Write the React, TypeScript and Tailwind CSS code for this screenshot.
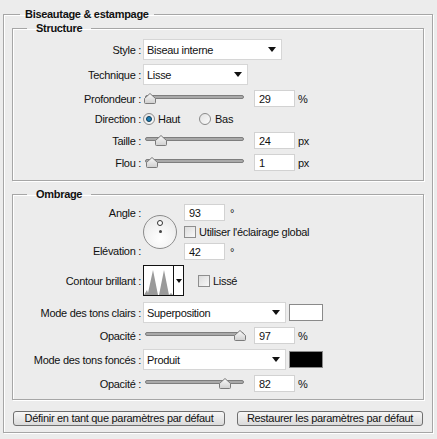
import React from "react";

const font = { fontFamily: '"Liberation Sans", Arial, sans-serif' };

function Label({ children }: { children: React.ReactNode }) {
  return <div className="w-[128px] shrink-0 text-right">{children}</div>;
}

function Arrow() {
  return (
    <svg width="8" height="5" viewBox="0 0 8 5" className="shrink-0">
      <path d="M0 0H8L4 5Z" fill="#111" />
    </svg>
  );
}

function Select({ value, width }: { value: string; width: string }) {
  return (
    <div
      className={`ml-[2px] flex h-[21px] items-center justify-between border border-[#d6d6d6] bg-white pl-[3px] pr-[5px] ${width}`}
    >
      <span>{value}</span>
      <Arrow />
    </div>
  );
}

function NumInput({ value }: { value: string }) {
  return (
    <div className="flex h-[17px] w-[41px] items-center border border-[#d2d2d2] bg-white pl-[4px]">
      {value}
    </div>
  );
}

function Thumb({ left }: { left: number }) {
  return (
    <svg
      width="12"
      height="11"
      viewBox="0 0 12 11"
      className="absolute top-[3px]"
      style={{ left: left - 6 }}
    >
      <defs>
        <linearGradient id="thumbg" x1="0" y1="0" x2="0" y2="1">
          <stop offset="0" stopColor="#fafafa" />
          <stop offset="1" stopColor="#cfcfcf" />
        </linearGradient>
      </defs>
      <path
        d="M6 0.5 L11.5 5.5 V9.5 Q11.5 10.5 10.5 10.5 H1.5 Q0.5 10.5 0.5 9.5 V5.5 Z"
        fill="url(#thumbg)"
        stroke="#7b7b7b"
      />
    </svg>
  );
}

function Slider({ thumb }: { thumb: number }) {
  return (
    <div className="relative ml-[4px] h-[17px] w-[99px] shrink-0">
      <div className="absolute left-0 right-0 top-[5px] h-[4px] rounded-[2px] border border-[#7e7e7e] bg-[#a9a9a9]" />
      <Thumb left={thumb} />
    </div>
  );
}

function SliderRow({
  label,
  thumb,
  value,
  unit,
  className,
}: {
  label: string;
  thumb: number;
  value: string;
  unit: string;
  className: string;
}) {
  return (
    <div className={`flex h-[17px] items-center ${className}`}>
      <Label>{label}</Label>
      <Slider thumb={thumb} />
      <div className="ml-[10px]">
        <NumInput value={value} />
      </div>
      <span className="ml-[3px]">{unit}</span>
    </div>
  );
}

function Checkbox() {
  return (
    <div className="h-[12px] w-[12px] shrink-0 border border-[#8e8e8e] bg-gradient-to-br from-[#dcdcdc] to-[#f8f8f8]" />
  );
}

function Radio({ checked }: { checked?: boolean }) {
  return (
    <div className="flex h-[12px] w-[12px] shrink-0 items-center justify-center rounded-full border border-[#8a8a8a] bg-gradient-to-br from-[#e2e2e2] to-[#fbfbfb]">
      {checked && (
        <div className="h-[6px] w-[6px] rounded-full border border-[#0d3a57] bg-[#1f7fb5]" />
      )}
    </div>
  );
}

const groupBorder =
  "border border-[#a6a6a6] shadow-[inset_1px_1px_0_#fff,1px_1px_0_#fff]";

export default function App() {
  return (
    <div
      className="h-[439px] w-[437px] overflow-hidden bg-[#ececec] pt-[7px] text-[11px] leading-[14px] tracking-[-0.3px] text-[#111]"
      style={font}
    >
      <fieldset className={`ml-[3px] w-[430px] px-[8px] pb-[6px] ${groupBorder}`}>
        <legend className="ml-[8px] px-[5px] font-bold">Biseautage &amp; estampage</legend>

        {/* Structure */}
        <fieldset className={`pb-[9px] ${groupBorder}`}>
          <legend className="ml-[14px] px-[9px] font-bold">Structure</legend>

          <div className="mt-[4px] flex h-[21px] items-center">
            <Label>Style :</Label>
            <Select value="Biseau interne" width="w-[139px]" />
          </div>
          <div className="mt-[4px] flex h-[21px] items-center">
            <Label>Technique :</Label>
            <Select value="Lisse" width="w-[105px]" />
          </div>
          <SliderRow label="Profondeur :" thumb={5} value="29" unit="%" className="mt-[5px]" />
          <div className="mt-[5px] flex h-[14px] items-center">
            <Label>Direction :</Label>
            <div className="ml-[2px]">
              <Radio checked />
            </div>
            <span className="ml-[3px]">Haut</span>
            <div className="ml-[19px]">
              <Radio />
            </div>
            <span className="ml-[4px]">Bas</span>
          </div>
          <SliderRow label="Taille :" thumb={16} value="24" unit="px" className="mt-[6px]" />
          <SliderRow label="Flou :" thumb={7} value="1" unit="px" className="mt-[5px]" />
        </fieldset>

        {/* Ombrage */}
        <fieldset className={`mt-[6px] pb-[7px] ${groupBorder}`}>
          <legend className="ml-[14px] px-[9px] font-bold">Ombrage</legend>

          <div className="mt-[3px] flex h-[56px] items-stretch">
            <div className="flex w-[128px] shrink-0 flex-col justify-between py-[2px] text-right">
              <span>Angle :</span>
              <span>Elévation :</span>
            </div>
            <div className="ml-[2px] flex items-center">
              <div className="flex h-[34px] w-[34px] flex-col items-center rounded-full border border-[#8c8c8c] bg-[radial-gradient(circle_at_50%_70%,#ffffff,#e4e4e4)]">
                <div className="mt-[4px] h-[6px] w-[6px] rounded-full border border-[#333] bg-white" />
                <div className="mt-[4px] h-[3px] w-[3px] rounded-full bg-[#444]" />
              </div>
            </div>
            <div className="ml-[7px] flex flex-col gap-[4px]">
              <div className="flex items-center">
                <NumInput value="93" />
                <span className="ml-[5px]">°</span>
              </div>
              <div className="flex h-[14px] items-center">
                <Checkbox />
                <span className="ml-[3px]">Utiliser l'éclairage global</span>
              </div>
              <div className="flex items-center">
                <NumInput value="42" />
                <span className="ml-[5px]">°</span>
              </div>
            </div>
          </div>

          <div className="mt-[5px] flex h-[31px] items-center">
            <Label>Contour brillant :</Label>
            <div className="ml-[2px] flex h-[31px] w-[41px] border border-[#111] bg-white">
              <svg width="29" height="29" viewBox="0 0 29 29" className="shrink-0">
                <path
                  d="M0 29 L3 24 L4 27 L9 4 L14 29 L15 29 L20 4 L25 29 Z M25 29 L27 27 L29 29 Z"
                  fill="#9a9a9a"
                />
              </svg>
              <div className="flex flex-1 items-center justify-center border-l border-[#111]">
                <svg width="6" height="4" viewBox="0 0 6 4">
                  <path d="M0 0H6L3 4Z" fill="#111" />
                </svg>
              </div>
            </div>
            <div className="ml-[14px]">
              <Checkbox />
            </div>
            <span className="ml-[3px]">Lissé</span>
          </div>

          <div className="mt-[6px] flex h-[21px] items-center">
            <Label>Mode des tons clairs :</Label>
            <Select value="Superposition" width="w-[143px]" />
            <div className="ml-[3px] h-[17px] w-[34px] border border-[#8a8a8a] bg-white" />
          </div>
          <SliderRow label="Opacité :" thumb={95} value="97" unit="%" className="mt-[4px]" />
          <div className="mt-[5px] flex h-[21px] items-center">
            <Label>Mode des tons foncés :</Label>
            <Select value="Produit" width="w-[143px]" />
            <div className="ml-[3px] h-[17px] w-[34px] border border-[#8a8a8a] bg-black" />
          </div>
          <SliderRow label="Opacité :" thumb={80} value="82" unit="%" className="mt-[5px]" />
        </fieldset>

        <div className="mt-[11px] flex gap-[12px] pl-[1px]">
          <button className="h-[15px] w-[212px] rounded-[3px] border border-[#6f6f6f] bg-gradient-to-b from-[#f7f7f7] to-[#dadada] leading-[13px]">
            Définir en tant que paramètres par défaut
          </button>
          <button className="h-[15px] w-[186px] rounded-[3px] border border-[#6f6f6f] bg-gradient-to-b from-[#f7f7f7] to-[#dadada] leading-[13px]">
            Restaurer les paramètres par défaut
          </button>
        </div>
      </fieldset>
    </div>
  );
}
